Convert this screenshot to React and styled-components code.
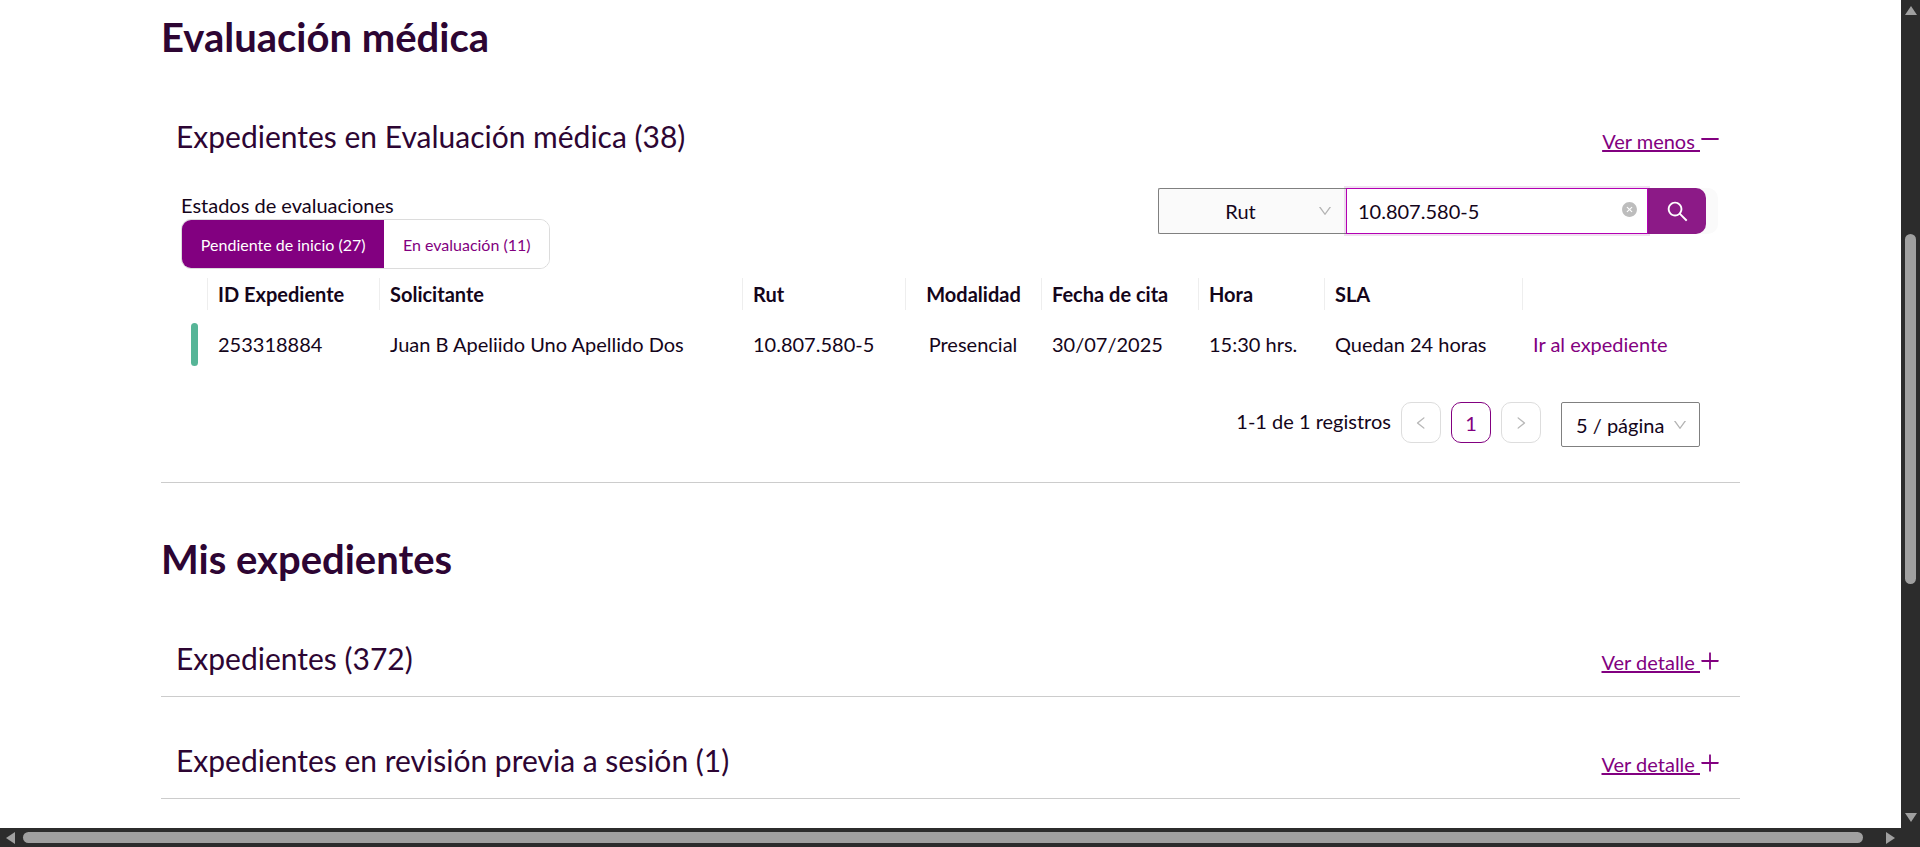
import styled, { createGlobalStyle } from "styled-components";
import {
	AiOutlineSearch,
	AiOutlineLeft,
	AiOutlineRight,
	AiOutlineDown,
	AiFillCloseCircle,
	AiOutlinePlus,
	AiOutlineMinus,
} from "react-icons/ai";

const columns = [
	{ label: "ID Expediente", value: "253318884", width: 172 },
	{ label: "Solicitante", value: "Juan B Apeliido Uno Apellido Dos", width: 363 },
	{ label: "Rut", value: "10.807.580-5", width: 163 },
	{ label: "Modalidad", value: "Presencial", width: 136, center: true },
	{ label: "Fecha de cita", value: "30/07/2025", width: 157 },
	{ label: "Hora", value: "15:30 hrs.", width: 126 },
	{ label: "SLA", value: "Quedan 24 horas", width: 198 },
];

export default function App() {
	return (
		<>
			<GlobalStyle />
			<Frame>
				<Page>
					<Content>
						<Heading>Evaluación médica</Heading>
						<OpenSection>
							<SectionHead>
								<SectionTitle>Expedientes en Evaluación médica (38)</SectionTitle>
								<ToggleLink>
									<u>Ver menos </u>
									<AiOutlineMinus />
								</ToggleLink>
							</SectionHead>
							<FilterRow>
								<div>
									<TabsLabel>Estados de evaluaciones</TabsLabel>
									<Tabs>
										<Tab $active>Pendiente de inicio (27)</Tab>
										<Tab>En evaluación (11)</Tab>
									</Tabs>
								</div>
								<SearchBox>
									<SearchSelect>
										<span>Rut</span>
										<AiOutlineDown />
									</SearchSelect>
									<SearchInput>
										<span>10.807.580-5</span>
										<AiFillCloseCircle />
									</SearchInput>
									<SearchButton>
										<AiOutlineSearch />
									</SearchButton>
								</SearchBox>
							</FilterRow>
							<Table>
								<HeadCell $plain />
								{columns.map((col) => (
									<HeadCell key={col.label} $center={col.center}>
										{col.label}
									</HeadCell>
								))}
								<HeadCell />
								<StripeCell>
									<Stripe />
								</StripeCell>
								{columns.map((col) => (
									<BodyCell key={col.label} $center={col.center}>
										{col.value}
									</BodyCell>
								))}
								<BodyCell $link>Ir al expediente</BodyCell>
							</Table>
							<Pagination>
								<PageInfo>1-1 de 1 registros</PageInfo>
								<PageButton $disabled>
									<AiOutlineLeft />
								</PageButton>
								<PageButton $current>1</PageButton>
								<PageButton $disabled>
									<AiOutlineRight />
								</PageButton>
								<PageSize>
									<span>5 / página</span>
									<AiOutlineDown />
								</PageSize>
							</Pagination>
						</OpenSection>
						<MineHeading>Mis expedientes</MineHeading>
						<ClosedSection>
							<SectionTitle>Expedientes (372)</SectionTitle>
							<ToggleLink>
								<u>Ver detalle </u>
								<AiOutlinePlus />
							</ToggleLink>
						</ClosedSection>
						<ClosedSection>
							<SectionTitle>Expedientes en revisión previa a sesión (1)</SectionTitle>
							<ToggleLink>
								<u>Ver detalle </u>
								<AiOutlinePlus />
							</ToggleLink>
						</ClosedSection>
					</Content>
				</Page>
				<VerticalBar>
					<ArrowUp />
					<VerticalThumb />
					<ArrowDown />
				</VerticalBar>
				<HorizontalBar>
					<ArrowLeft />
					<HorizontalThumb />
					<ArrowRight />
				</HorizontalBar>
			</Frame>
		</>
	);
}

const GlobalStyle = createGlobalStyle`
	html, body {
		margin: 0;
		height: 100%;
		overflow: hidden;
		background: #fff;
		font-family: Lato, "Noto Sans", sans-serif;
		color: #14051a;
	}
`;
const Frame = styled.div`
	display: grid;
	grid-template-columns: 1901px 19px;
	grid-template-rows: 828px 19px;
	width: 1920px;
	height: 847px;
	overflow: hidden;
`;
const Page = styled.main`
	overflow: hidden;
	padding-left: 161px;
`;
const Content = styled.div`
	width: 1579px;
`;
const Heading = styled.h1`
	margin: 0;
	padding-top: 12px;
	font-size: 40px;
	line-height: 50px;
	font-weight: 700;
	color: #2d0533;
`;
const MineHeading = styled(Heading)`
	padding-top: 51px;
	padding-bottom: 11px;
`;
const OpenSection = styled.section`
	padding-top: 56px;
	height: 421px;
	box-sizing: border-box;
	border-bottom: 1px solid #cccccc;
`;
const SectionHead = styled.div`
	display: flex;
	justify-content: space-between;
	align-items: center;
	height: 36px;
	padding: 0 18px 0 15px;
`;
const SectionTitle = styled.h2`
	margin: 0;
	font-size: 30px;
	line-height: 36px;
	font-weight: 400;
	color: #2d0533;
`;
const ToggleLink = styled.a`
	display: flex;
	align-items: center;
	font-size: 20px;
	line-height: 24px;
	color: #820080;
	margin-top: 9px;
	white-space: pre;
	svg {
		font-size: 24px;
		margin-left: -2px;
		margin-top: -3px;
	}
`;
const FilterRow = styled.div`
	display: flex;
	justify-content: space-between;
	padding: 34px 22px 0 20px;
	height: 124px;
	box-sizing: border-box;
`;
const TabsLabel = styled.div`
	font-size: 20px;
	line-height: 27px;
	margin-top: 4px;
	color: #14051a;
`;
const Tabs = styled.div`
	display: flex;
	width: 369px;
	height: 50px;
	border: 1px solid #dcdcdc;
	border-radius: 10px;
	box-sizing: border-box;
	overflow: hidden;
`;
const Tab = styled.div`
	display: flex;
	align-items: center;
	justify-content: center;
	height: 100%;
	font-size: 16px;
	width: ${(p) => (p.$active ? "203px" : "165px")};
	background: ${(p) => (p.$active ? "#820080" : "#fff")};
	color: ${(p) => (p.$active ? "#fff" : "#820080")};
`;
const SearchBox = styled.div`
	display: flex;
	align-self: flex-start;
	height: 46px;
	width: 560px;
	padding-right: 12px;
	background: #fafafa;
	border-radius: 0 10px 10px 0;
	box-sizing: border-box;
`;
const SearchSelect = styled.div`
	position: relative;
	display: flex;
	align-items: center;
	justify-content: center;
	width: 188px;
	padding-right: 24px;
	border: 1px solid #808080;
	border-right: none;
	border-radius: 2px 0 0 2px;
	box-sizing: border-box;
	background: #fafafa;
	font-size: 20px;
	svg {
		position: absolute;
		right: 13px;
		font-size: 16px;
		color: #b3b3b3;
	}
`;
const SearchInput = styled.div`
	position: relative;
	display: flex;
	align-items: center;
	width: 302px;
	padding-left: 11px;
	border: 1px solid #b300b3;
	box-shadow: 0 0 0 2px rgba(130, 0, 128, 0.12);
	box-sizing: border-box;
	background: #fff;
	font-size: 20px;
	svg {
		position: absolute;
		right: 9px;
		top: 12px;
		font-size: 17px;
		color: #bdbdbd;
	}
`;
const SearchButton = styled.div`
	display: flex;
	align-items: center;
	justify-content: center;
	width: 58px;
	background: #8c1a87;
	border-radius: 0 10px 10px 0;
	color: #fff;
	font-size: 25px;
`;
const Table = styled.div`
	display: grid;
	grid-template-columns: 26px 172px 363px 163px 136px 157px 126px 198px 188px;
	margin-left: 20px;
`;
const HeadCell = styled.div`
	height: 32px;
	padding: 0 10px;
	box-sizing: border-box;
	font-size: 20px;
	font-weight: 700;
	line-height: 32px;
	white-space: nowrap;
	text-align: ${(p) => (p.$center ? "center" : "left")};
	border-left: ${(p) => (p.$plain ? "none" : "1px solid #eeeeee")};
`;
const StripeCell = styled.div`
	display: flex;
	align-items: center;
	height: 68px;
	padding-left: 10px;
`;
const Stripe = styled.div`
	width: 7px;
	height: 43px;
	border-radius: 4px;
	background: #56b597;
`;
const BodyCell = styled.div`
	display: flex;
	align-items: center;
	justify-content: ${(p) => (p.$center ? "center" : "flex-start")};
	height: 68px;
	padding: 0 11px;
	font-size: 20px;
	white-space: nowrap;
	color: ${(p) => (p.$link ? "#820080" : "#14051a")};
`;
const Pagination = styled.div`
	display: flex;
	align-items: flex-start;
	justify-content: flex-end;
	padding-right: 40px;
	margin-top: 24px;
`;
const PageInfo = styled.div`
	font-size: 20px;
	line-height: 38px;
	margin-right: 10px;
`;
const PageButton = styled.div`
	display: flex;
	align-items: center;
	justify-content: center;
	width: 40px;
	height: 41px;
	box-sizing: border-box;
	margin-right: 10px;
	border-radius: 10px;
	font-size: ${(p) => (p.$current ? "20px" : "16px")};
	border: 1px solid ${(p) => (p.$current ? "#820080" : "#dddddd")};
	color: ${(p) => (p.$current ? "#820080" : "#b8b8b8")};
`;
const PageSize = styled.div`
	display: flex;
	align-items: center;
	gap: 8px;
	width: 139px;
	height: 45px;
	margin-left: 10px;
	padding-left: 14px;
	box-sizing: border-box;
	border: 1px solid #808080;
	border-radius: 2px;
	font-size: 20px;
	white-space: nowrap;
	svg {
		font-size: 16px;
		color: #b3b3b3;
	}
`;
const ClosedSection = styled.section`
	display: flex;
	justify-content: space-between;
	align-items: center;
	height: 102px;
	padding: 24px 18px 0 15px;
	box-sizing: border-box;
	border-bottom: 1px solid #cccccc;
`;
const VerticalBar = styled.div`
	display: flex;
	flex-direction: column;
	align-items: center;
	background: #2c2c2c;
`;
const HorizontalBar = styled.div`
	grid-column: 1 / 3;
	display: flex;
	align-items: center;
	background: #2c2c2c;
`;
const VerticalThumb = styled.div`
	width: 11px;
	height: 350px;
	margin-top: 219px;
	border-radius: 6px;
	background: #a0a0a0;
`;
const HorizontalThumb = styled.div`
	width: 1840px;
	height: 11px;
	margin-left: 8px;
	border-radius: 6px;
	background: #a0a0a0;
`;
const ArrowUp = styled.div`
	margin-top: 6px;
	border-left: 6.5px solid transparent;
	border-right: 6.5px solid transparent;
	border-bottom: 9px solid #a0a0a0;
`;
const ArrowDown = styled.div`
	margin-top: 229px;
	border-left: 6.5px solid transparent;
	border-right: 6.5px solid transparent;
	border-top: 9px solid #a0a0a0;
`;
const ArrowLeft = styled.div`
	margin-left: 6px;
	border-top: 6.5px solid transparent;
	border-bottom: 6.5px solid transparent;
	border-right: 9px solid #a0a0a0;
`;
const ArrowRight = styled.div`
	margin-left: 23px;
	border-top: 6.5px solid transparent;
	border-bottom: 6.5px solid transparent;
	border-left: 9px solid #a0a0a0;
`;
